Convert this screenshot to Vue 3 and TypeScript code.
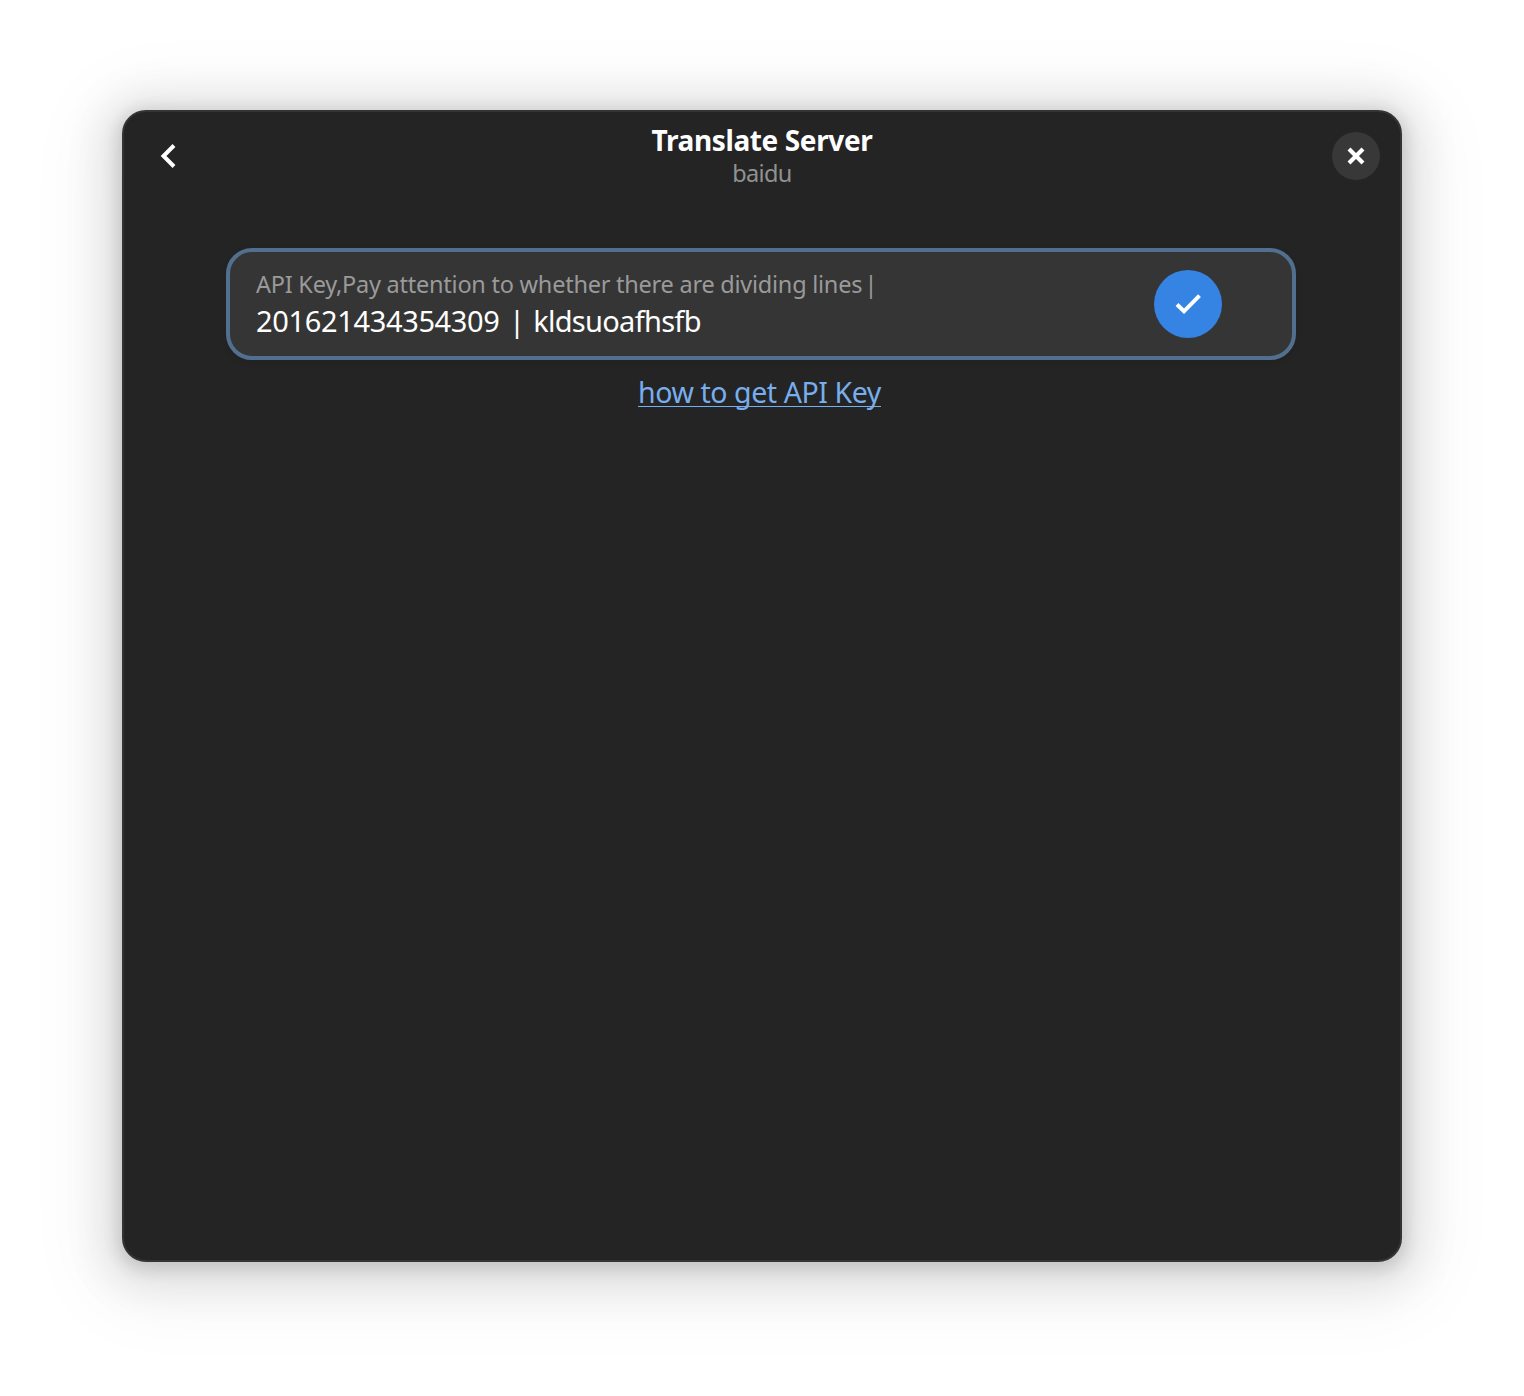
<script setup lang="ts">
import { ref } from 'vue'

const title = ref('Translate Server')
const server = ref('baidu')
const label = 'API Key,Pay attention to whether there are dividing lines'
const separator = '|'
const appId = ref('201621434354309')
const secret = ref('kldsuoafhsfb')
</script>

<template>
  <div class="desktop">
    <main class="window">
      <header class="headerbar">
        <button class="back" aria-label="Back">
          <svg width="32" height="32" viewBox="0 0 32 32">
            <path d="M22 5.500 11.500 16l10.500 10.500" fill="none" stroke="#fff" stroke-width="4" />
          </svg>
        </button>
        <div class="titles">
          <h1>{{ title }}</h1>
          <p>{{ server }}</p>
        </div>
        <button class="close" aria-label="Close">
          <svg width="48" height="48" viewBox="0 0 48 48">
            <path d="M17 17 31 31M31 17 17 31" fill="none" stroke="#fff" stroke-width="4.200" />
          </svg>
        </button>
      </header>
      <section class="row">
        <div class="entry">
          <div class="label">{{ label }} <span class="bar">{{ separator }}</span></div>
          <div class="value">
            <span class="id">{{ appId }}</span> {{ separator }} <span class="secret">{{ secret }}</span>
          </div>
        </div>
        <button class="apply" aria-label="Apply">
          <svg width="68" height="68" viewBox="0 0 68 68">
            <path d="M23 34.500 30 41.300 45.500 25.700" fill="none" stroke="#fff" stroke-width="4" />
          </svg>
        </button>
      </section>
      <div class="help"><a>how to get API Key</a></div>
    </main>
  </div>
</template>

<style>
body {
  background: #fff;
}
</style>

<style scoped>
.desktop {
  box-sizing: border-box;
  height: 1396px;
  padding: 110px 122px 134px;
  overflow: hidden;
  font-family: 'Noto Sans', 'Open Sans', sans-serif;
}
.window {
  box-sizing: border-box;
  height: 1152px;
  border: 2px solid #343434;
  border-radius: 24px;
  background: #242424;
  box-shadow:
    0 4px 16px 4px rgba(0, 0, 0, 0.13),
    0 6px 40px 20px rgba(0, 0, 0, 0.09),
    0 12px 72px 34px rgba(0, 0, 0, 0.045);
}
button {
  padding: 0;
  border: 0;
  background: none;
}
svg {
  display: block;
}
.headerbar {
  display: flex;
  align-items: center;
  justify-content: space-between;
  height: 88px;
  padding: 0 20px 0 28px;
}
.back {
  width: 40px;
}
.titles {
  text-align: center;
}
.titles h1,
.titles p {
  margin: 0;
  white-space: nowrap;
}
.titles h1 {
  height: 34px;
  font-size: 28px;
  line-height: 32px;
  letter-spacing: -0.38px;
  color: #fff;
}
.titles p {
  height: 30px;
  font-size: 23.5px;
  line-height: 30px;
  letter-spacing: -0.65px;
  color: #919191;
}
.close {
  width: 48px;
  height: 48px;
  border-radius: 50%;
  background: #383838;
}
.row {
  box-sizing: border-box;
  display: flex;
  align-items: center;
  justify-content: space-between;
  height: 112px;
  margin: 48px 104px 0 102px;
  padding: 0 70px 0 26px;
  border: 4px solid #51708f;
  border-radius: 26px;
  background: #353535;
  box-shadow: 0 2px 6px rgba(0, 0, 0, 0.1);
}
.entry {
  white-space: nowrap;
}
.label {
  height: 36px;
  font-size: 23.5px;
  line-height: 34px;
  letter-spacing: -0.24px;
  color: #9a9a9a;
}
.bar {
  margin-left: -3.5px;
}
.value {
  height: 38px;
  font-size: 29px;
  line-height: 35px;
  word-spacing: 2px;
  color: #fff;
}
.id {
  letter-spacing: -0.35px;
}
.secret {
  margin-left: -1.5px;
  letter-spacing: -0.7px;
}
.apply {
  width: 68px;
  height: 68px;
  border-radius: 50%;
  background: #3584e4;
}
.help {
  display: flex;
  justify-content: center;
  height: 40px;
  margin: 13px 5px 0 0;
  font-size: 28.5px;
  line-height: 39px;
  letter-spacing: -0.42px;
  color: #78aeed;
}
.help a {
  text-decoration: underline;
  text-decoration-thickness: 1px;
  text-underline-offset: 3px;
  text-decoration-skip-ink: none;
}
</style>
